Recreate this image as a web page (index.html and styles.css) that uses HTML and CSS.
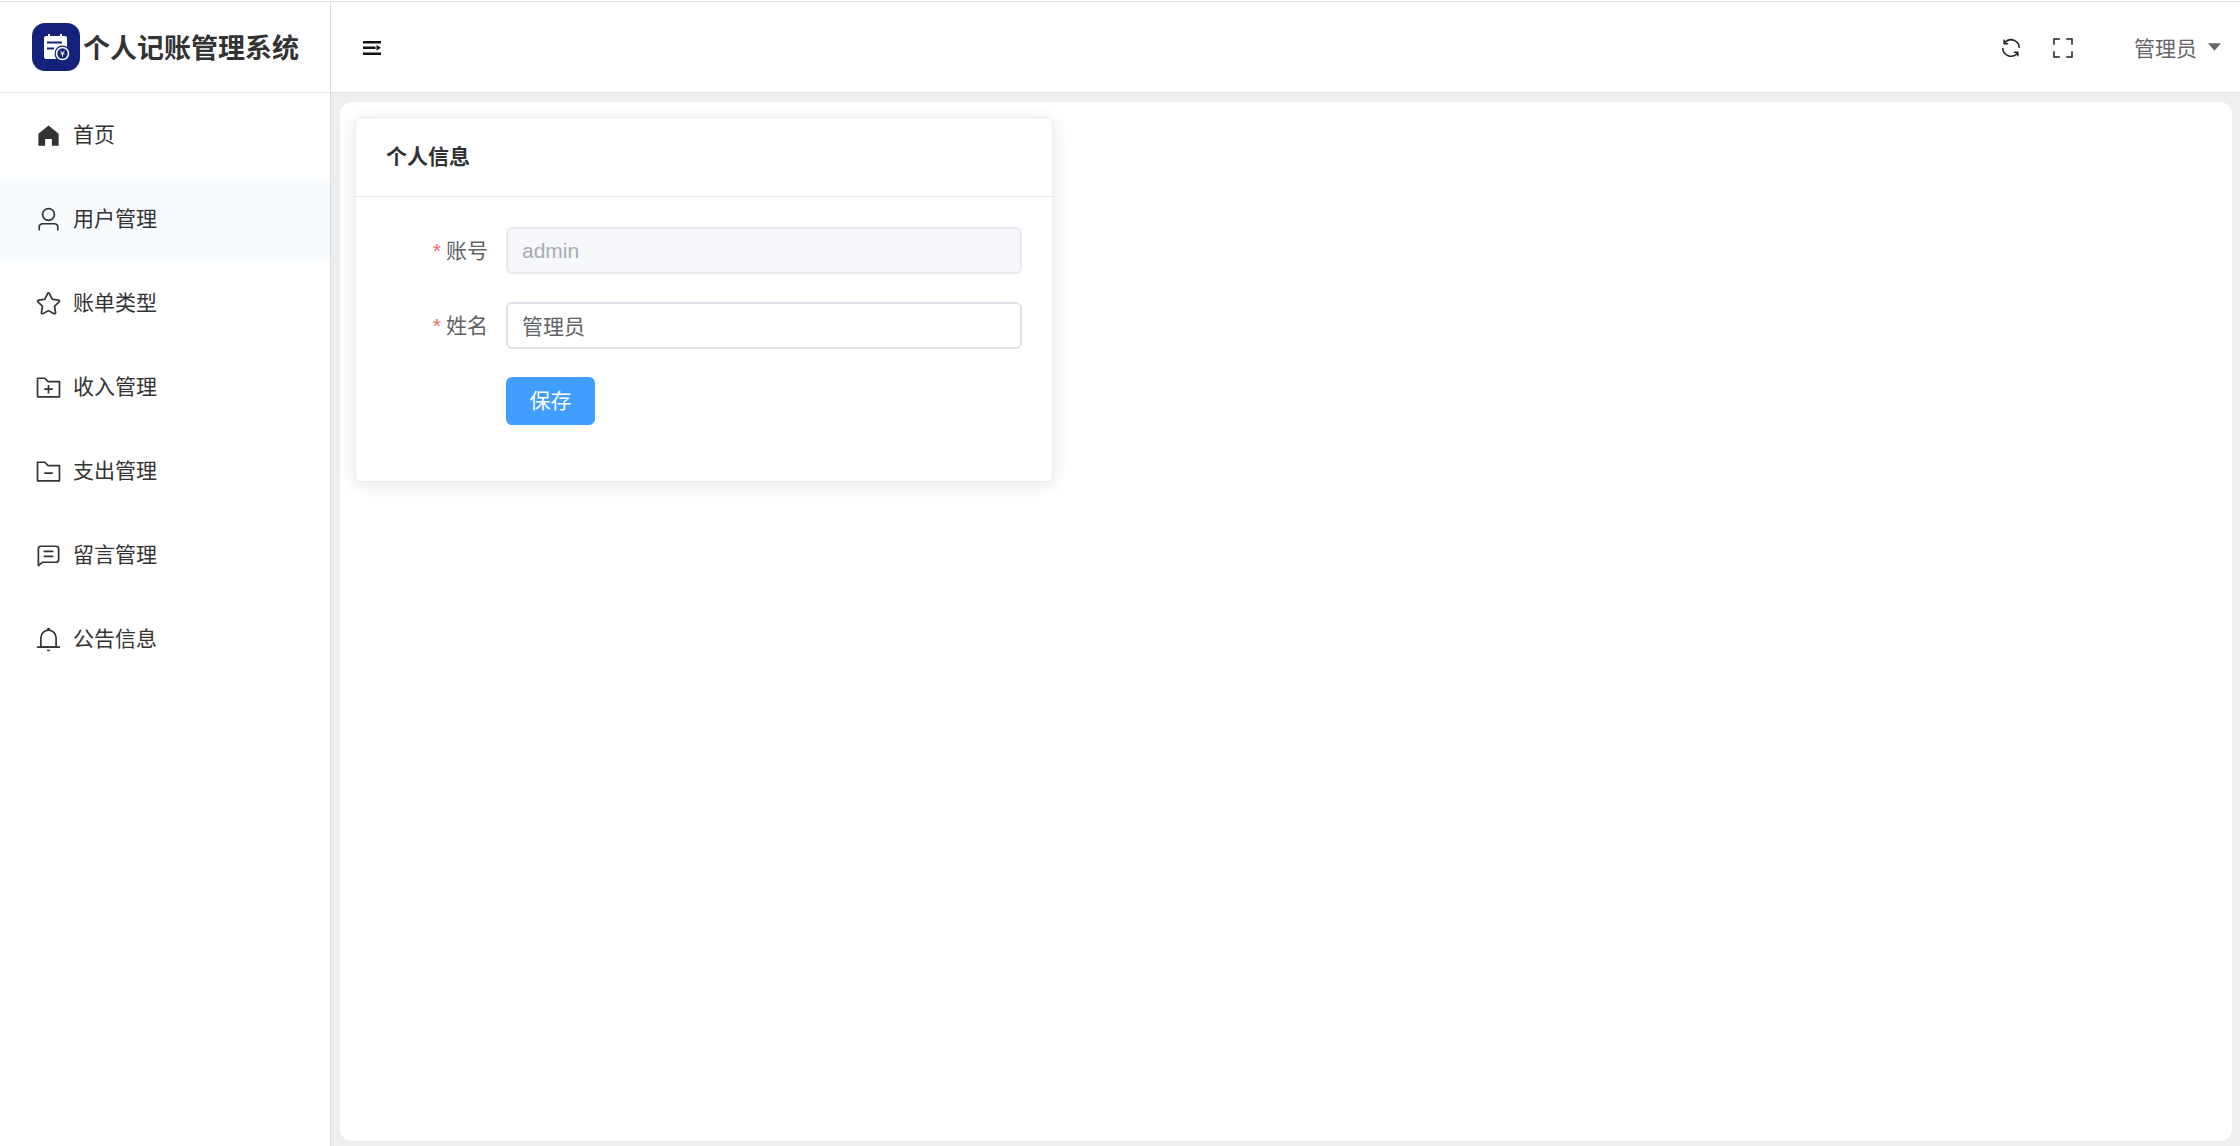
FILE: index.html
```html
<!DOCTYPE html>
<html lang="zh-CN">
<head>
    <meta charset="UTF-8">
    <title>个人记账管理系统</title>
    <link rel="stylesheet" href="styles.css">
</head>
<body>
    <div class="layout">
        <aside class="sidebar">
            <div class="logo">
                <svg class="logo-mark" viewBox="0 0 48 48">
                    <rect width="48" height="48" rx="13" fill="#14227c"/>
                    <rect x="12" y="13" width="23" height="23" rx="2" fill="#fff"/>
                    <rect x="16" y="11" width="2" height="4" fill="#fff"/>
                    <rect x="28" y="11" width="2" height="4" fill="#fff"/>
                    <rect x="15" y="18.500" width="15" height="2" fill="#14227c"/>
                    <rect x="15" y="24.500" width="7" height="2" fill="#14227c"/>
                    <circle cx="30.500" cy="30.500" r="8" fill="#14227c"/>
                    <circle cx="30.500" cy="30.500" r="6.800" fill="#fff"/>
                    <circle cx="30.500" cy="30.500" r="5.200" fill="#14227c"/>
                    <path d="M28.500 27.800 30.500 30.300 32.500 27.800M30.500 30.300v3.400M28.500 30.800h4" fill="none" stroke="#fff" stroke-width="1"/>
                </svg>
                <span class="logo-title">个人记账管理系统</span>
            </div>
            <ul class="menu">
                <li class="menu-item">
                    <svg class="menu-icon" viewBox="0 0 1024 1024"><path d="M512 128 128 447.936V896h255.936V640H640v256h255.936V447.936z"/></svg>
                    <span>首页</span>
                </li>
                <li class="menu-item active">
                    <svg class="menu-icon" viewBox="0 0 1024 1024"><path d="M512 512a192 192 0 1 0 0-384 192 192 0 0 0 0 384m0 64a256 256 0 1 1 0-512 256 256 0 0 1 0 512m320 320v-96a96 96 0 0 0-96-96H288a96 96 0 0 0-96 96v96a32 32 0 1 1-64 0v-96a160 160 0 0 1 160-160h448a160 160 0 0 1 160 160v96a32 32 0 1 1-64 0"/></svg>
                    <span>用户管理</span>
                </li>
                <li class="menu-item">
                    <svg class="menu-icon" viewBox="0 0 1024 1024"><path d="m512 747.84 228.16 119.936a6.4 6.4 0 0 0 9.28-6.72l-43.52-254.08 184.512-179.904a6.4 6.4 0 0 0-3.52-10.88l-255.104-37.12L517.76 147.904a6.4 6.4 0 0 0-11.52 0L392.192 379.072l-255.104 37.12a6.4 6.4 0 0 0-3.52 10.88L318.08 606.976l-43.584 254.08a6.4 6.4 0 0 0 9.28 6.72zM313.6 924.48a70.4 70.4 0 0 1-102.144-74.24l37.888-220.928L88.96 472.96A70.4 70.4 0 0 1 128 352.896l221.76-32.256 99.2-200.96a70.4 70.4 0 0 1 126.208 0l99.2 200.96 221.824 32.256a70.4 70.4 0 0 1 39.04 120.064L774.72 629.376l37.888 220.928a70.4 70.4 0 0 1-102.144 74.24L512 820.096l-198.4 104.32z"/></svg>
                    <span>账单类型</span>
                </li>
                <li class="menu-item">
                    <svg class="menu-icon" viewBox="0 0 1024 1024"><path d="M128 192v640h768V320H485.76L357.504 192zm-32-64h287.872l128.384 128H928a32 32 0 0 1 32 32v576a32 32 0 0 1-32 32H96a32 32 0 0 1-32-32V160a32 32 0 0 1 32-32m384 416V416h64v128h128v64H544v128h-64V608H352v-64z"/></svg>
                    <span>收入管理</span>
                </li>
                <li class="menu-item">
                    <svg class="menu-icon" viewBox="0 0 1024 1024"><path d="M128 192v640h768V320H485.76L357.504 192zm-32-64h287.872l128.384 128H928a32 32 0 0 1 32 32v576a32 32 0 0 1-32 32H96a32 32 0 0 1-32-32V160a32 32 0 0 1 32-32m256 416h320v64H352z"/></svg>
                    <span>支出管理</span>
                </li>
                <li class="menu-item">
                    <svg class="menu-icon" viewBox="0 0 1024 1024"><path d="M160 826.88 273.536 736H800a64 64 0 0 0 64-64V256a64 64 0 0 0-64-64H224a64 64 0 0 0-64 64zM296 800 147.968 918.4A32 32 0 0 1 96 893.44V256a128 128 0 0 1 128-128h576a128 128 0 0 1 128 128v416a128 128 0 0 1-128 128z"/><path d="M352 512h320q32 0 32 32t-32 32H352q-32 0-32-32t32-32M352 320h320q32 0 32 32t-32 32H352q-32 0-32-32t32-32"/></svg>
                    <span>留言管理</span>
                </li>
                <li class="menu-item">
                    <svg class="menu-icon" viewBox="0 0 1024 1024"><path d="M512 64a64 64 0 0 1 64 64v64H448v-64a64 64 0 0 1 64-64"/><path d="M256 768h512V448a256 256 0 1 0-512 0zm256-640a320 320 0 0 1 320 320v384H192V448a320 320 0 0 1 320-320"/><path d="M96 768h832q32 0 32 32t-32 32H96q-32 0-32-32t32-32m352 128h128a64 64 0 0 1-128 0"/></svg>
                    <span>公告信息</span>
                </li>
            </ul>
        </aside>

        <div class="main">
            <header class="topbar">
                <svg class="fold-icon" viewBox="0 0 18 14"><path d="M0 0h18v2.500H0zM0 5.500h12.500v2.500H0zM0 11.500h18V14H0zM13.500 4 18 6.750 13.500 9.500z"/></svg>
                <div class="topbar-right">
                    <svg class="tool-icon" viewBox="0 0 1024 1024"><path d="M771.776 794.88A384 384 0 0 1 128 512h64a320 320 0 0 0 555.712 216.448H654.72a32 32 0 1 1 0-64h149.056a32 32 0 0 1 32 32v148.928a32 32 0 1 1-64 0v-50.56zM276.288 295.616h92.992a32 32 0 0 1 0 64H220.16a32 32 0 0 1-32-32V178.56a32 32 0 0 1 64 0v50.56A384 384 0 0 1 896.128 512h-64a320 320 0 0 0-555.776-216.384z"/></svg>
                    <svg class="tool-icon" viewBox="0 0 1024 1024"><path d="m160 96.064 192 .192a32 32 0 0 1 0 64l-192-.192V352a32 32 0 0 1-64 0V96h64zm0 831.872V928H96V672a32 32 0 1 1 64 0v191.936l192-.192a32 32 0 1 1 0 64zM864 96.064V96h64v256a32 32 0 1 1-64 0V160.064l-192 .192a32 32 0 1 1 0-64zm0 831.872-192-.192a32 32 0 0 1 0-64l192 .192V672a32 32 0 1 1 64 0v256h-64z"/></svg>
                    <div class="user">
                        <span>管理员</span>
                        <svg class="caret" viewBox="0 0 14 8"><path d="M0 0h14L7 8z"/></svg>
                    </div>
                </div>
            </header>

            <div class="content-wrap">
                <main class="content">
                    <section class="card">
                        <div class="card-header">个人信息</div>
                        <form class="card-body">
                            <div class="form-row">
                                <label class="form-label"><i>*</i>账号</label>
                                <input class="form-input" type="text" value="admin" disabled>
                            </div>
                            <div class="form-row">
                                <label class="form-label"><i>*</i>姓名</label>
                                <input class="form-input name-input" type="text" value="管理员">
                            </div>
                            <div class="form-row">
                                <button class="btn-save" type="button">保存</button>
                            </div>
                        </form>
                    </section>
                </main>
            </div>
        </div>
    </div>
</body>
</html>
```

FILE: styles.css
```css
* {
    box-sizing: border-box;
}
html, body {
    height: 100%;
    overflow: hidden;
}
body {
    margin: 0;
    padding-top: 1px;
    background-color: #fff;
    color: #333;
    font-family: "Liberation Sans", "Noto Sans CJK SC", sans-serif;
    font-size: 21px;
}
.layout {
    display: flex;
    height: 100%;
    border-top: 1px solid #e2e2e2;
}
.sidebar {
    flex: 0 0 331px;
    background-color: #fff;
    border-right: 1px solid #dcdcdc;
}
.logo {
    display: flex;
    align-items: center;
    height: 91px;
    padding-left: 32px;
    border-bottom: 1px solid #e4e4e4;
}
.logo-mark {
    width: 48px;
    height: 48px;
    margin-right: 3px;
}
.logo-title {
    margin-bottom: 1px;
    font-size: 27px;
    font-weight: 700;
    color: #333;
}
.menu {
    list-style: none;
    margin: 0;
    padding: 0;
}
.menu-item {
    display: flex;
    align-items: center;
    height: 84px;
    padding-left: 35px;
    color: #333;
}
.menu-item span {
    margin-bottom: 4px;
}
.menu-item.active {
    background-color: #f7fbfe;
}
.menu-icon {
    width: 27px;
    height: 27px;
    margin-right: 11px;
    fill: #333;
}
.main {
    flex: 1;
    display: flex;
    flex-direction: column;
    min-width: 0;
}
.topbar {
    display: flex;
    align-items: center;
    justify-content: space-between;
    height: 91px;
    padding: 0 19px 0 32px;
    border-bottom: 1px solid #e4e4e4;
}
.fold-icon {
    width: 18px;
    height: 14px;
    margin-top: 2px;
    fill: #111;
}
.topbar-right {
    display: flex;
    align-items: center;
}
.tool-icon {
    width: 24px;
    height: 24px;
    margin-top: 2px;
    margin-right: 28px;
    fill: #222;
}
.user {
    display: flex;
    align-items: center;
    margin-left: 31px;
    color: #666;
}
.caret {
    width: 13px;
    height: 8px;
    margin-left: 11px;
    fill: #666;
}
.content-wrap {
    flex: 1;
    padding: 9px 8px 5px 9px;
    background-color: #eeeeee;
}
.content {
    height: 100%;
    padding: 15px 15px;
    background-color: #fff;
    border-radius: 12px;
}
.card {
    width: 698px;
    height: 365px;
    background-color: #fff;
    border: 1px solid #ececec;
    border-radius: 6px;
    box-shadow: 0 3px 18px rgba(0, 0, 0, 0.1);
}
.card-header {
    height: 79px;
    padding-left: 30px;
    border-bottom: 1px solid #e6e8ec;
    font-size: 21px;
    font-weight: 700;
    line-height: 78px;
    color: #303133;
}
.card-body {
    padding: 30px 30px 0 0;
}
.form-row {
    display: flex;
    align-items: center;
    margin-bottom: 28px;
}
.form-row:last-child {
    padding-left: 150px;
}
.form-label {
    width: 132px;
    margin-right: 18px;
    margin-bottom: 4px;
    text-align: right;
    color: #606266;
}
.form-label i {
    margin-right: 5px;
    font-style: normal;
    color: #f56c6c;
}
.form-input {
    flex: 1;
    min-width: 0;
    height: 47px;
    padding: 0 14px;
    background-color: #fff;
    border: 2px solid #dfe2e8;
    border-radius: 6px;
    color: #606266;
    font-family: inherit;
    font-size: 21px;
    outline: none;
}
.name-input {
    padding-bottom: 2px;
}
.form-input:disabled {
    background-color: #f5f7fa;
    border-color: #e8eaef;
    color: #a8abb2;
}
.btn-save {
    width: 89px;
    height: 48px;
    padding: 0 0 4px;
    background-color: #409eff;
    border: none;
    border-radius: 6px;
    color: #fff;
    font-family: inherit;
    font-size: 21px;
}
```
